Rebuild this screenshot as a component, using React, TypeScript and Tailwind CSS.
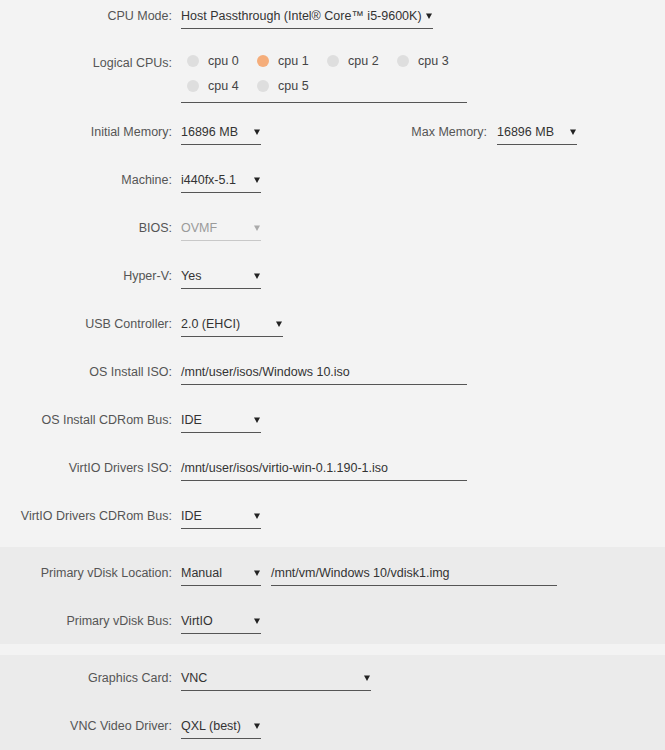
import type { ReactNode } from "react";

type RowProps = {
  label: string;
  className?: string;
  children: ReactNode;
};

function Caret() {
  return (
    <svg width="6" height="6" viewBox="0 0 6 6" className="shrink-0">
      <path d="M0 0.5h6L3 6z" fill="currentColor" />
    </svg>
  );
}

// label column is right aligned, value starts 9px after it
function Row({ label, className = "h-[48px]", children }: RowProps) {
  return (
    <div className={`flex items-start ${className}`}>
      <div className="w-[172px] shrink-0 pt-[1px] text-right leading-[26px] text-[#555]">
        {label}
      </div>
      <div className="ml-[9px] flex items-start">{children}</div>
    </div>
  );
}

function Select({
  value,
  width = "w-[80px]",
  disabled = false,
}: {
  value: string;
  width?: string;
  disabled?: boolean;
}) {
  return (
    <div
      className={`${width} flex h-[27px] items-center justify-between border-b pr-[1px] pt-[1px] leading-[26px] ${
        disabled
          ? "border-[#c8c8c8] text-[#9a9a9a]"
          : "border-[#555] text-[#333]"
      }`}
    >
      <span className="whitespace-nowrap">{value}</span>
      <span className={disabled ? "text-[#aaa]" : "text-[#222]"}>
        <Caret />
      </span>
    </div>
  );
}

function TextInput({ value }: { value: string }) {
  return (
    <div className="flex h-[27px] w-[286px] items-center border-b border-[#555] pt-[1px] leading-[26px] text-[#333]">
      {value}
    </div>
  );
}

const cpus = [
  { name: "cpu 0", on: false },
  { name: "cpu 1", on: true },
  { name: "cpu 2", on: false },
  { name: "cpu 3", on: false },
  { name: "cpu 4", on: false },
  { name: "cpu 5", on: false },
];

export default function App() {
  return (
    <div className="min-h-screen bg-[#f3f3f3] font-['Liberation_Sans',Arial,sans-serif] text-[12.5px]">
      {/* General */}
      <div className="pt-[2px]">
        <Row label="CPU Mode:" className="h-[46px]">
          <Select
            width="w-[252px]"
            value="Host Passthrough (Intel® Core™ i5-9600K)"
          />
        </Row>

        <div className="flex h-[70px] items-start">
          <div className="w-[172px] shrink-0 pt-[3px] text-right leading-[25px] text-[#555]">
            Logical CPUs:
          </div>
          <div className="ml-[9px] flex w-[286px] flex-wrap border-b border-[#555] pb-[4px] pl-[6px]">
            {cpus.map((cpu) => (
              <label
                key={cpu.name}
                className="flex h-[25px] w-[70px] items-center"
              >
                <span
                  className={`h-[12px] w-[12px] rounded-full ${
                    cpu.on ? "bg-[#f5ad7a]" : "bg-[#dedede]"
                  }`}
                />
                <span className="ml-[9px] pt-[1px] text-[#444]">
                  {cpu.name}
                </span>
              </label>
            ))}
          </div>
        </div>

        <div className="flex h-[48px] items-start">
          <Row label="Initial Memory:" className="">
            <Select value="16896 MB" />
          </Row>
          <div className="w-[226px] shrink-0 pt-[1px] text-right leading-[26px] text-[#555]">
            Max Memory:
          </div>
          <div className="ml-[10px]">
            <Select value="16896 MB" />
          </div>
        </div>

        <Row label="Machine:">
          <Select value="i440fx-5.1" />
        </Row>
        <Row label="BIOS:">
          <Select value="OVMF" disabled />
        </Row>
        <Row label="Hyper-V:">
          <Select value="Yes" />
        </Row>
        <Row label="USB Controller:">
          <Select width="w-[102px]" value="2.0 (EHCI)" />
        </Row>
        <Row label="OS Install ISO:">
          <TextInput value="/mnt/user/isos/Windows 10.iso" />
        </Row>
        <Row label="OS Install CDRom Bus:">
          <Select value="IDE" />
        </Row>
        <Row label="VirtIO Drivers ISO:">
          <TextInput value="/mnt/user/isos/virtio-win-0.1.190-1.iso" />
        </Row>
        <Row label="VirtIO Drivers CDRom Bus:" className="h-[45px]">
          <Select value="IDE" />
        </Row>
      </div>

      {/* Disks */}
      <div className="bg-[#ebebeb] pt-[12px]">
        <Row label="Primary vDisk Location:">
          <Select value="Manual" />
          <div className="ml-[10px]">
            <TextInput value="/mnt/vm/Windows 10/vdisk1.img" />
          </div>
        </Row>
        <Row label="Primary vDisk Bus:" className="h-[37px]">
          <Select value="VirtIO" />
        </Row>
      </div>

      <div className="h-[11px] bg-[#f3f3f3]" />

      {/* Graphics */}
      <div className="bg-[#ebebeb] pb-[20px] pt-[9px]">
        <Row label="Graphics Card:">
          <Select width="w-[190px]" value="VNC" />
        </Row>
        <Row label="VNC Video Driver:">
          <Select value="QXL (best)" />
        </Row>
      </div>
    </div>
  );
}
